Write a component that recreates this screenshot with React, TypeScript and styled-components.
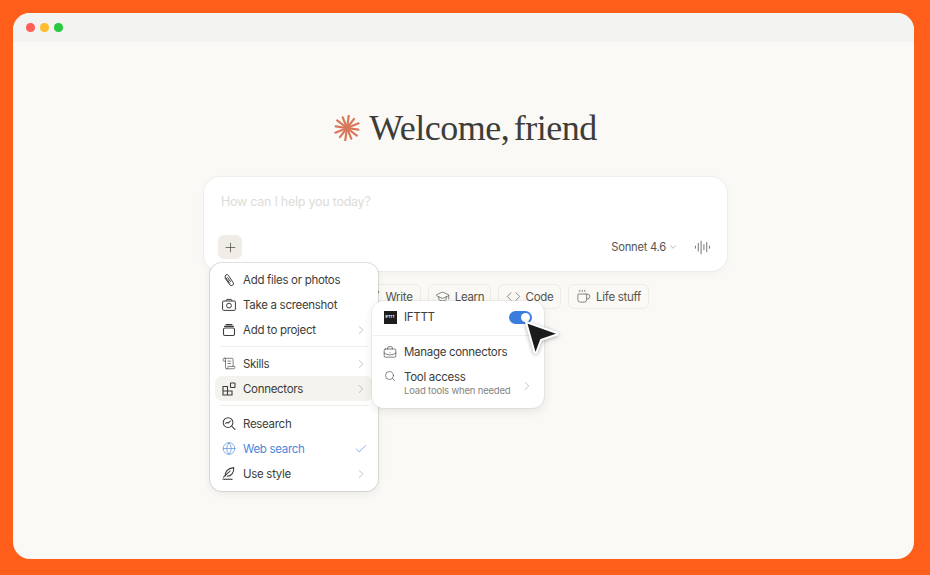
import styled, { createGlobalStyle } from 'styled-components';
import {
  AudioLines,
  BriefcaseBusiness,
  Check,
  ChevronDown,
  ChevronRight,
  Code,
  Coffee,
  Globe,
  GraduationCap,
  Pen,
  Plus,
  ScrollText,
  Search,
} from 'lucide-react';

const GlobalStyle = createGlobalStyle`
  html, body {
    margin: 0;
    background: #ff5f1a;
    font-family: Inter, "Liberation Sans", sans-serif;
  }
`;

const Page = styled.div`
  width: 930px;
  height: 575px;
  box-sizing: border-box;
  padding: 13px 16px 16px 13px;
`;

const Window = styled.div`
  height: 100%;
  display: flex;
  flex-direction: column;
  border-radius: 17px;
  overflow: hidden;
  background: #faf9f6;
`;

const TitleBar = styled.div`
  flex: 0 0 29px;
  display: flex;
  align-items: center;
  gap: 5.5px;
  padding-left: 13px;
  background: #f3f3f2;
`;

const Dot = styled.span<{ $color: string }>`
  width: 8.5px;
  height: 8.5px;
  border-radius: 50%;
  background: ${(props) => props.$color};
`;

const Content = styled.div`
  flex: 1;
  display: flex;
  flex-direction: column;
  align-items: center;
  padding-top: 66px;
  padding-left: 4px;
`;

const Greeting = styled.div`
  height: 40px;
  display: flex;
  align-items: center;
  gap: 9px;
`;

const Heading = styled.h1`
  margin: 0;
  font-family: "Liberation Serif", serif;
  font-weight: 400;
  font-size: 36px;
  letter-spacing: -0.5px;
  word-spacing: -4px;
  color: #3d3d3a;
`;

const ComposerArea = styled.div`
  position: relative;
  width: 523px;
  margin-top: 29px;
`;

const Composer = styled.div`
  height: 94px;
  box-sizing: border-box;
  display: flex;
  flex-direction: column;
  justify-content: space-between;
  padding: 17px 16px 12px 14px;
  background: #fff;
  border-radius: 16px;
  box-shadow: 0 0 0 1px rgba(40, 40, 30, 0.035), 0 3px 10px rgba(40, 40, 30, 0.035);
`;

const Placeholder = styled.div`
  padding-left: 3px;
  font-size: 12.5px;
  line-height: 16px;
  letter-spacing: -0.25px;
  color: #dcdcd9;
`;

const ComposerBar = styled.div`
  display: flex;
  align-items: center;
`;

const AddButton = styled.div`
  width: 24px;
  height: 24px;
  display: flex;
  align-items: center;
  justify-content: center;
  border-radius: 6px;
  background: #efede5;
  color: #4a4a46;
`;

const ModelName = styled.div`
  margin-left: auto;
  display: flex;
  align-items: center;
  gap: 2px;
  font-size: 11.2px;
  letter-spacing: -0.25px;
  color: #55554f;
`;

const VoiceIcon = styled.div`
  display: flex;
  margin-left: 16px;
  color: #4f4f4a;
`;

const Chips = styled.div`
  display: flex;
  justify-content: flex-end;
  gap: 7px;
  margin-top: 13px;
  padding-right: 78px;
`;

const Chip = styled.div<{ $width: number }>`
  width: ${(props) => props.$width}px;
  height: 25px;
  box-sizing: border-box;
  display: flex;
  align-items: center;
  justify-content: center;
  gap: 5px;
  border: 1px solid #eeece6;
  border-radius: 6px;
  font-size: 11.5px;
  letter-spacing: -0.3px;
  color: #55554f;
`;

const Menu = styled.div`
  position: absolute;
  left: 6px;
  top: 86px;
  width: 168px;
  box-sizing: border-box;
  padding: 4px 5px 5px;
  background: #fff;
  border-radius: 12px;
  box-shadow: 0 0 0 1px rgba(40, 40, 30, 0.13), 0 3px 8px rgba(40, 40, 30, 0.07);
`;

const SubMenu = styled(Menu)`
  left: 168px;
  top: 124px;
  width: 172px;
  box-shadow: 0 0 0 1px rgba(40, 40, 30, 0.05), 0 3px 10px rgba(40, 40, 30, 0.1);
`;

const Row = styled.div<{ $active?: boolean; $accent?: boolean }>`
  height: 25px;
  display: flex;
  align-items: center;
  gap: 7px;
  padding: 0 7px;
  border-radius: 7px;
  font-size: 11.5px;
  letter-spacing: -0.3px;
  white-space: nowrap;
  color: ${(props) => (props.$accent ? '#4a86d8' : '#3d3d3a')};
  background: ${(props) => (props.$active ? '#f4f3ee' : 'transparent')};
`;

const SubRow = styled(Row)`
  height: 24px;
  padding: 0 7px 0 6px;
`;

const TallRow = styled(SubRow)`
  height: 38px;
  margin-top: 1px;
  align-items: flex-start;
  padding-top: 4px;
  box-sizing: border-box;
`;

const IconSlot = styled.span`
  flex: 0 0 14px;
  min-width: 0;
  height: 14px;
  display: flex;
  align-items: center;
  justify-content: center;
`;

const RowEnd = styled.span`
  margin-left: auto;
  margin-right: -2px;
  display: flex;
  color: #9a9a94;
`;

const TallRowEnd = styled(RowEnd)`
  align-self: center;
  margin-top: -1px;
`;

const Divider = styled.div<{ $after: number }>`
  height: 1px;
  margin: 4px 5px ${(props) => props.$after}px;
  background: #efeeea;
`;

const SubDivider = styled.div`
  height: 1px;
  margin: 6px -5px 4px;
  background: #f1f0ec;
`;

const Label = styled.div`
  line-height: 16px;
`;

const SubLabel = styled.div`
  font-size: 9.5px;
  line-height: 12px;
  letter-spacing: -0.18px;
  color: #85857e;
`;

const IftttLogo = styled.span`
  width: 13px;
  height: 13px;
  flex: none;
  display: flex;
  align-items: center;
  justify-content: center;
  background: #1d1d1b;
  color: #fff;
  font-size: 3px;
  font-weight: 800;
  letter-spacing: 0.1px;
`;

const Toggle = styled.span`
  width: 23px;
  height: 13px;
  margin-left: auto;
  box-sizing: border-box;
  padding: 2px;
  display: flex;
  justify-content: flex-end;
  border-radius: 7px;
  background: #3b7ddd;
`;

const Knob = styled.span`
  width: 9px;
  height: 9px;
  border-radius: 50%;
  background: #fff;
`;

const Pointer = styled.svg`
  position: absolute;
  left: 318px;
  top: 143px;
  filter: drop-shadow(0 1px 2px rgba(0, 0, 0, 0.3));
`;

function Asterisk() {
  const rays = Array.from({ length: 12 }, (_, i) => (i * 360) / 12 + 8);
  return (
    <svg width="26" height="26" viewBox="0 0 26 26">
      {rays.map((angle, i) => (
        <line
          key={angle}
          x1="13"
          y1="13"
          x2="13"
          y2={i % 2 ? 1.5 : 0.5}
          stroke="#d9775a"
          strokeWidth="2.2"
          strokeLinecap="round"
          transform={`rotate(${angle} 13 13)`}
        />
      ))}
    </svg>
  );
}

function ClipIcon() {
  return (
    <svg width="14" height="14" viewBox="0 0 14 14" fill="none" stroke="currentColor" strokeWidth="1" strokeLinecap="round">
      <path d="M3 5l4.800 6.800a2 2 0 0 0 3.300-2.300L6.300 2.300a1.700 1.700 0 0 0-2.800 2l4.300 6" />
      <path d="M5.800 4.800l2.700 3.800" />
    </svg>
  );
}

function CameraIcon() {
  return (
    <svg width="14" height="14" viewBox="0 0 14 14" fill="none" stroke="currentColor" strokeWidth="1" strokeLinejoin="round">
      <rect x="0.600" y="3" width="12.800" height="9.400" rx="1" />
      <path d="M3.800 3l1-1.600h4.400l1 1.600" />
      <circle cx="7" cy="7.600" r="2.400" />
    </svg>
  );
}

function ProjectIcon() {
  return (
    <svg width="14" height="14" viewBox="0 0 14 14" fill="none" stroke="currentColor" strokeWidth="1.1">
      <rect x="1.500" y="5" width="11" height="7.500" rx="1.500" />
      <path d="M2.500 3.400h9M4 1.600h6" strokeLinecap="round" />
    </svg>
  );
}

function ConnectorsIcon() {
  return (
    <svg width="14" height="14" viewBox="0 0 14 14" fill="none" stroke="currentColor" strokeWidth="1.1">
      <path d="M1 4.500h4.500V13H1zM1 9h9v4H5.500" />
      <rect x="8.500" y="1" width="4.500" height="4.500" rx="0.5" />
    </svg>
  );
}

function ResearchIcon() {
  return (
    <svg width="15" height="15" viewBox="0 0 15 15" fill="none" stroke="currentColor" strokeWidth="1.1">
      <circle cx="6.500" cy="6.500" r="5.200" />
      <path d="M10.300 10.300l3.700 3.700" strokeLinecap="round" />
      <path d="M3.800 7.400l1.600-1.200 1.200 1 2.400-2.200" strokeLinecap="round" strokeLinejoin="round" />
    </svg>
  );
}

function StyleIcon() {
  return (
    <svg width="15" height="15" viewBox="0 0 15 15" fill="none" stroke="currentColor" strokeWidth="1.1">
      <path d="M3.400 10.600C3 6 5.600 1.800 12.600 1.200c.4 5.400-2.600 9.400-7.400 9.200" strokeLinejoin="round" />
      <path d="M1.600 11.400L8.600 5" strokeLinecap="round" />
      <path d="M1 13.600c1-.9 1.500.9 2.500 0s1.500.9 2.500 0 1.500.9 2.500 0 1.500.9 2.500 0" strokeLinecap="round" />
    </svg>
  );
}

export default function App() {
  return (
    <Page>
      <GlobalStyle />
      <Window>
        <TitleBar>
          <Dot $color="#ff5f57" />
          <Dot $color="#febc2e" />
          <Dot $color="#28c840" />
        </TitleBar>
        <Content>
          <Greeting>
            <Asterisk />
            <Heading>Welcome, friend</Heading>
          </Greeting>
          <ComposerArea>
            <Composer>
              <Placeholder>How can I help you today?</Placeholder>
              <ComposerBar>
                <AddButton>
                  <Plus size={15} strokeWidth={1.2} />
                </AddButton>
                <ModelName>
                  Sonnet 4.6
                  <ChevronDown size={10} strokeWidth={1} />
                </ModelName>
                <VoiceIcon>
                  <AudioLines size={17} strokeWidth={1.1} />
                </VoiceIcon>
              </ComposerBar>
            </Composer>
            <Chips>
              <Chip $width={64}>
                <Pen size={15} strokeWidth={1.1} />
                Write
              </Chip>
              <Chip $width={63}>
                <GraduationCap size={15} strokeWidth={1.1} />
                Learn
              </Chip>
              <Chip $width={63}>
                <Code size={15} strokeWidth={1.1} />
                Code
              </Chip>
              <Chip $width={81}>
                <Coffee size={15} strokeWidth={1.1} />
                Life stuff
              </Chip>
            </Chips>
            <Menu>
              <Row>
                <IconSlot><ClipIcon /></IconSlot>
                Add files or photos
              </Row>
              <Row>
                <IconSlot><CameraIcon /></IconSlot>
                Take a screenshot
              </Row>
              <Row>
                <IconSlot><ProjectIcon /></IconSlot>
                Add to project
                <RowEnd><ChevronRight size={14} strokeWidth={1} /></RowEnd>
              </Row>
              <Divider $after={4} />
              <Row>
                <IconSlot><ScrollText size={15} strokeWidth={1.1} /></IconSlot>
                Skills
                <RowEnd><ChevronRight size={14} strokeWidth={1} /></RowEnd>
              </Row>
              <Row $active>
                <IconSlot><ConnectorsIcon /></IconSlot>
                Connectors
                <RowEnd><ChevronRight size={14} strokeWidth={1} /></RowEnd>
              </Row>
              <Divider $after={5} />
              <Row>
                <IconSlot><ResearchIcon /></IconSlot>
                Research
              </Row>
              <Row $accent>
                <IconSlot><Globe size={15} strokeWidth={1.1} /></IconSlot>
                Web search
                <RowEnd><Check size={14} strokeWidth={1.1} color="#4a86d8" /></RowEnd>
              </Row>
              <Row>
                <IconSlot><StyleIcon /></IconSlot>
                Use style
                <RowEnd><ChevronRight size={14} strokeWidth={1} /></RowEnd>
              </Row>
            </Menu>
            <SubMenu>
              <SubRow>
                <IconSlot><IftttLogo>IFTTT</IftttLogo></IconSlot>
                IFTTT
                <Toggle><Knob /></Toggle>
              </SubRow>
              <SubDivider />
              <SubRow>
                <IconSlot><BriefcaseBusiness size={15} strokeWidth={1.1} /></IconSlot>
                Manage connectors
              </SubRow>
              <TallRow>
                <IconSlot><Search size={12} strokeWidth={1.2} /></IconSlot>
                <div>
                  <Label>Tool access</Label>
                  <SubLabel>Load tools when needed</SubLabel>
                </div>
                <TallRowEnd><ChevronRight size={14} strokeWidth={1} /></TallRowEnd>
              </TallRow>
            </SubMenu>
            <Pointer width="40" height="36" viewBox="0 0 40 36">
              <path
                d="M4 2 L35 13 Q36 14 35 14.500 L19 20 L14.500 32 Q13.500 33.500 12.500 32 Z"
                fill="#1b1b1b"
                stroke="#fff"
                strokeWidth="2"
                strokeLinejoin="round"
              />
            </Pointer>
          </ComposerArea>
        </Content>
      </Window>
    </Page>
  );
}
